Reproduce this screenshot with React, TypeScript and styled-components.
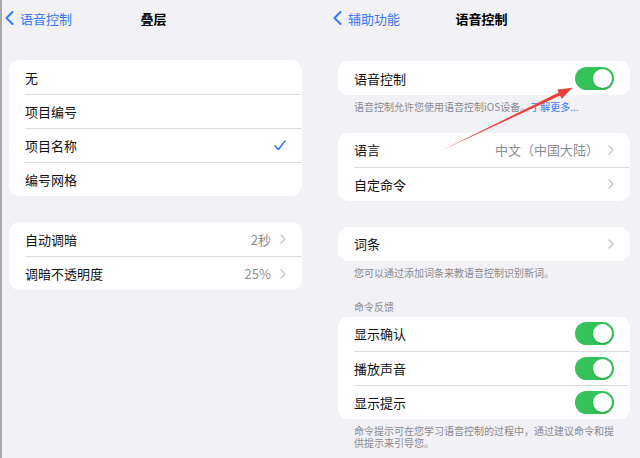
import React from "react";
import styled, { createGlobalStyle } from "styled-components";

const Global = createGlobalStyle`
  html, body { margin: 0; padding: 0; background: #f1f1f6; }
  body { font-family: "Noto Sans CJK SC", "Noto Sans", "Liberation Sans", sans-serif; }
  * { box-sizing: border-box; }
`;

const Page = styled.div`
  position: relative;
  width: 640px;
  height: 458px;
  overflow: hidden;
  background: #f1f1f6;
  display: flex;
  gap: 17px;
`;

const Column = styled.div<{ $w: number; $pl: number; $pr: number; $border?: boolean }>`
  width: ${(p) => p.$w}px;
  flex: none;
  display: flex;
  flex-direction: column;
  padding: 0 ${(p) => p.$pr}px 0 ${(p) => p.$pl}px;
  border-left: ${(p) => (p.$border ? "2px solid #a6a6ab" : "none")};
`;

const NavBar = styled.div<{ $inset: number }>`
  height: 36px;
  display: grid;
  grid-template-columns: 1fr auto 1fr;
  align-items: center;
  margin-left: ${(p) => p.$inset}px;
`;

const Back = styled.div`
  display: flex;
  align-items: center;
  gap: 6px;
  color: #3478f6;
  font-size: 13px;
  justify-self: start;
`;

const Title = styled.div`
  font-size: 13px;
  font-weight: 600;
  color: #000;
`;

const Section = styled.div<{ $mt: number }>`
  margin-top: ${(p) => p.$mt}px;
  display: flex;
  flex-direction: column;
`;

const Card = styled.div`
  background: #fff;
  border-radius: 10px;
  overflow: hidden;
`;

const Row = styled.div`
  display: flex;
  height: 34px;
  padding-left: 16px;
`;

const RowBody = styled.div`
  flex: 1;
  display: flex;
  align-items: center;
  padding-right: 16px;
  ${Row}:not(:first-child) & {
    border-top: 0.5px solid #dcdce0;
  }
`;

const Label = styled.div`
  flex: 1;
  font-size: 13px;
  color: #111;
`;

const Value = styled.div`
  font-size: 13px;
  color: #8c8c91;
  margin-right: 9px;
`;

const Footer = styled.div<{ $pt: number }>`
  padding: ${(p) => p.$pt}px 16px 0 16px;
  font-size: 10px;
  line-height: 12.8px;
  color: #8a8a8f;
`;

const Header = styled.div`
  padding: 0 16px 4px 16px;
  font-size: 10px;
  line-height: 13px;
  color: #8a8a8f;
`;

const Link = styled.span`
  color: #3478f6;
`;

const ToggleTrack = styled.div`
  width: 39px;
  height: 23px;
  border-radius: 12px;
  background: #35c25a;
  display: flex;
  align-items: center;
  justify-content: flex-end;
  padding: 2px;
`;

const Knob = styled.div`
  width: 19px;
  height: 19px;
  border-radius: 50%;
  background: #fff;
  box-shadow: 0 1px 2px rgba(0, 0, 0, 0.15);
`;

const Overlay = styled.svg`
  position: absolute;
  left: 0;
  top: 0;
  pointer-events: none;
`;

const Chevron = () => (
  <svg width="6" height="10" viewBox="0 0 6 10">
    <path d="M1 1 L5 5 L1 9" fill="none" stroke="#c3c3c7" strokeWidth="1.4" strokeLinecap="round" strokeLinejoin="round" />
  </svg>
);

const BackChevron = () => (
  <svg width="9" height="14" viewBox="0 0 9 14">
    <path d="M7.5 1 L1.5 7 L7.5 13" fill="none" stroke="#3478f6" strokeWidth="2" strokeLinecap="round" strokeLinejoin="round" />
  </svg>
);

const Check = () => (
  <svg width="12" height="11" viewBox="0 0 12 11">
    <path d="M1 5.8 L4.4 9.5 L11 1" fill="none" stroke="#3478f6" strokeWidth="1.6" strokeLinecap="round" strokeLinejoin="round" />
  </svg>
);

const Toggle = () => (
  <ToggleTrack>
    <Knob />
  </ToggleTrack>
);

type Item = { label: string; value?: string; chevron?: boolean; check?: boolean; toggle?: boolean };

const List = ({ items }: { items: Item[] }) => (
  <Card>
    {items.map((it) => (
      <Row key={it.label}>
        <RowBody>
          <Label>{it.label}</Label>
          {it.value && <Value>{it.value}</Value>}
          {it.chevron && <Chevron />}
          {it.check && <Check />}
          {it.toggle && <Toggle />}
        </RowBody>
      </Row>
    ))}
  </Card>
);

export default function App() {
  return (
    <>
      <Global />
      <Page>
        <Column $w={311} $pl={7} $pr={9} $border>
          <NavBar $inset={-4}>
            <Back>
              <BackChevron />
              <span>语音控制</span>
            </Back>
            <Title>叠层</Title>
            <div />
          </NavBar>
          <Section $mt={24}>
            <List
              items={[
                { label: "无" },
                { label: "项目编号" },
                { label: "项目名称", check: true },
                { label: "编号网格" },
              ]}
            />
          </Section>
          <Section $mt={26}>
            <List
              items={[
                { label: "自动调暗", value: "2秒", chevron: true },
                { label: "调暗不透明度", value: "25%", chevron: true },
              ]}
            />
          </Section>
        </Column>
        <Column $w={312} $pl={10} $pr={10}>
          <NavBar $inset={-5}>
            <Back>
              <BackChevron />
              <span>辅助功能</span>
            </Back>
            <Title>语音控制</Title>
            <div />
          </NavBar>
          <Section $mt={25}>
            <List items={[{ label: "语音控制", toggle: true }]} />
            <Footer $pt={6}>
              语音控制允许您使用语音控制iOS设备。<Link>了解更多...</Link>
            </Footer>
          </Section>
          <Section $mt={19}>
            <List
              items={[
                { label: "语言", value: "中文（中国大陆）", chevron: true },
                { label: "自定命令", chevron: true },
              ]}
            />
          </Section>
          <Section $mt={26}>
            <List items={[{ label: "词条", chevron: true }]} />
            <Footer $pt={6}>您可以通过添加词条来教语音控制识别新词。</Footer>
          </Section>
          <Section $mt={20}>
            <Header>命令反馈</Header>
            <List
              items={[
                { label: "显示确认", toggle: true },
                { label: "播放声音", toggle: true },
                { label: "显示提示", toggle: true },
              ]}
            />
            <Footer $pt={6}>命令提示可在您学习语音控制的过程中，通过建议命令和提供提示来引导您。</Footer>
          </Section>
        </Column>
        <Overlay width="640" height="458" viewBox="0 0 640 458">
          <polygon
            points="441.5,150.5 558.7,92.6 557.3,89.5 572.5,87.8 561.8,98.8 560.1,95.6"
            fill="#e8403a"
          />
        </Overlay>
      </Page>
    </>
  );
}
